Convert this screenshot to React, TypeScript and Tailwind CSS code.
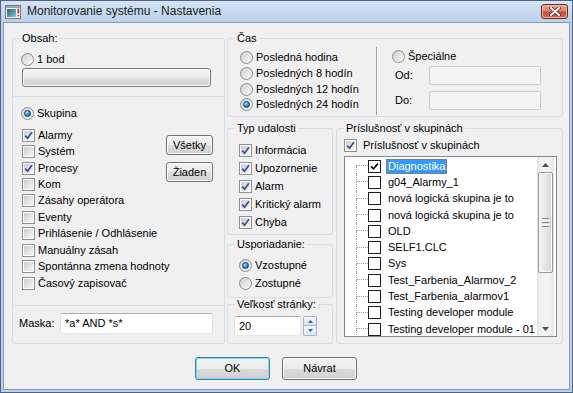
import React from "react";

function Radio({ checked }: { checked?: boolean }) {
  return (
    <span className="w-[13px] h-[13px] shrink-0 rounded-full border border-[#8c8c8c] bg-[linear-gradient(135deg,#cfcfcf,#fbfbfb)] flex items-center justify-center">
      {checked && (
        <span className="w-[7px] h-[7px] rounded-full border border-[#173f6a] bg-[radial-gradient(circle_at_35%_30%,#a6e4ff,#2c8ad3_55%,#123f70)]" />
      )}
    </span>
  );
}

function Check({ checked }: { checked?: boolean }) {
  return (
    <span className="w-[13px] h-[13px] shrink-0 border border-[#8e8f8f] bg-white p-[1px] flex">
      <span className="flex-1 bg-[linear-gradient(135deg,#c9cdd3,#f7f7f7)] flex items-center justify-center">
        {checked && (
          <svg width="9" height="9" viewBox="0 0 9 9">
            <path d="M1.2 4.6 L3.6 7.2 L7.9 1.2" stroke="#3b4e95" strokeWidth="1.7" fill="none" />
          </svg>
        )}
      </span>
    </span>
  );
}

function RadioRow({ label, checked, className = "" }: { label: string; checked?: boolean; className?: string }) {
  return (
    <div className={`flex items-center gap-[3px] ${className}`}>
      <Radio checked={checked} />
      <span className="whitespace-nowrap">{label}</span>
    </div>
  );
}

function CheckRow({ label, checked, className = "" }: { label: string; checked?: boolean; className?: string }) {
  return (
    <div className={`flex items-center gap-[3px] ${className}`}>
      <Check checked={checked} />
      <span className="whitespace-nowrap">{label}</span>
    </div>
  );
}

function Btn({ children, className = "", primary }: { children: React.ReactNode; className?: string; primary?: boolean }) {
  return (
    <div
      className={`flex items-center justify-center rounded-[3px] border bg-[linear-gradient(#f2f2f2_0%,#ebebeb_50%,#dddddd_51%,#cfcfcf_100%)] ${
        primary ? "border-[#3c7fb1] shadow-[inset_0_0_0_1px_#7ad8f8]" : "border-[#707070] shadow-[inset_0_0_0_1px_#fcfcfc]"
      } ${className}`}
    >
      {children}
    </div>
  );
}

function Group({ title, className = "", children }: { title: string; className?: string; children?: React.ReactNode }) {
  return (
    <fieldset className={`border border-[#d5dfe5] rounded-[3px] flex flex-col ${className}`}>
      <legend className="ml-[7px] px-[2px] leading-[12px]">{title}</legend>
      {children}
    </fieldset>
  );
}

function AppIcon() {
  return (
    <svg width="16" height="16" viewBox="0 0 16 16" className="shrink-0">
      <defs>
        <linearGradient id="ig" x1="0" y1="0" x2="1" y2="1">
          <stop offset="0" stopColor="#1f6f57" />
          <stop offset="1" stopColor="#8fb8e6" />
        </linearGradient>
      </defs>
      <rect x="0.5" y="1.5" width="15" height="13" fill="#f3f3f3" stroke="#7b7b7b" />
      <rect x="1" y="2" width="14" height="2" fill="#9aa6b4" />
      <rect x="2" y="5" width="9" height="8" fill="url(#ig)" />
      <rect x="12.5" y="4.5" width="1.6" height="5" fill="#d42a1c" />
      <rect x="12.5" y="10.8" width="1.6" height="1.6" fill="#d42a1c" />
    </svg>
  );
}

function CloseBtn() {
  return (
    <div className="ml-auto w-[27px] h-[15px] rounded-[3px] border border-[#6b2a1f] bg-[linear-gradient(#e9a99a_0%,#d98673_45%,#c4503b_55%,#cf6a52_100%)] shadow-[inset_0_0_0_1px_#f0b7a9] flex items-center justify-center">
      <svg width="12" height="9" viewBox="0 0 12 9">
        <path d="M2 1 L10 8 M10 1 L2 8" stroke="#5b2117" strokeWidth="3.6" strokeLinecap="round" />
        <path d="M2 1 L10 8 M10 1 L2 8" stroke="#ffffff" strokeWidth="2" strokeLinecap="round" />
      </svg>
    </div>
  );
}

function TextBox({ value = "", className = "", disabled }: { value?: string; className?: string; disabled?: boolean }) {
  return (
    <div
      className={`flex items-center px-[4px] rounded-[2px] border ${
        disabled
          ? "bg-[#f4f4f4] border-[#cbcdd0]"
          : "bg-white border-[#abadb3] border-x-[#dbdfe6] border-b-[#e3e9ef]"
      } ${className}`}
    >
      {value}
    </div>
  );
}

const tree = [
  "Diagnostika",
  "g04_Alarmy_1",
  "nová logická skupina je to",
  "nová logická skupina je to",
  "OLD",
  "SELF1.CLC",
  "Sys",
  "Test_Farbenia_Alarmov_2",
  "Test_Farbenia_alarmov1",
  "Testing developer module",
  "Testing developer module - 01",
];

const groups = [
  { label: "Alarmy", checked: true },
  { label: "Systém" },
  { label: "Procesy", checked: true },
  { label: "Kom" },
  { label: "Zásahy operátora" },
  { label: "Eventy" },
  { label: "Prihlásenie / Odhlásenie" },
  { label: "Manuálny zásah" },
  { label: "Spontánna zmena hodnoty" },
  { label: "Časový zapisovač" },
];

function TreeRow({ label, first, selected }: { label: string; first?: boolean; selected?: boolean }) {
  return (
    <div className="h-[16.3px] flex items-stretch pl-[11px] shrink-0">
      <div className="w-[12px] flex flex-col">
        <div className={`h-1/2 border-b border-dotted border-[#a0a0a0] ${first ? "" : "border-l"}`} />
        <div className="flex-1 border-l border-dotted border-[#a0a0a0]" />
      </div>
      <div className="flex items-center">
        <span className="w-[13px] h-[13px] border border-[#1c1c1c] bg-white flex items-center justify-center">
          {selected && (
            <svg width="9" height="9" viewBox="0 0 9 9">
              <path d="M1 4.2 L3.4 6.8 L8 1.6" stroke="#000" strokeWidth="1.6" fill="none" />
            </svg>
          )}
        </span>
        <span
          className={`ml-[5px] px-[1px] leading-[13px] border whitespace-nowrap ${
            selected ? "bg-[#3399ff] text-white border-dotted border-[#cc6600]" : "border-transparent"
          }`}
        >
          {label}
        </span>
      </div>
    </div>
  );
}

function ScrollBar() {
  return (
    <div className="w-[17px] mr-[2px] flex flex-col items-center bg-[linear-gradient(to_right,#e4e4e4,#f2f2f2_25%,#f2f2f2_75%,#e4e4e4)]">
      <div className="h-[15px] flex items-center justify-center">
        <svg width="7" height="4" viewBox="0 0 7 4">
          <path d="M0 4 L3.5 0 L7 4Z" fill="#4f4f4f" />
        </svg>
      </div>
      <div className="w-[15px] h-[101px] rounded-[2px] border border-[#979797] bg-[linear-gradient(to_right,#f4f4f4,#e6e6e6_50%,#d6d6d6)] shadow-[inset_0_0_0_1px_#fbfbfb] flex flex-col items-center justify-center gap-[1px]">
        <div className="w-[7px] h-px bg-[#8a8a8a]" />
        <div className="w-[7px] h-px bg-[#ffffff]" />
        <div className="w-[7px] h-px bg-[#8a8a8a]" />
        <div className="w-[7px] h-px bg-[#ffffff]" />
        <div className="w-[7px] h-px bg-[#8a8a8a]" />
      </div>
      <div className="flex-1" />
      <div className="h-[15px] flex items-center justify-center">
        <svg width="7" height="4" viewBox="0 0 7 4">
          <path d="M0 0 L3.5 4 L7 0Z" fill="#4f4f4f" />
        </svg>
      </div>
    </div>
  );
}

export default function App() {
  return (
    <div className="w-[573px] h-[393px] flex flex-col border border-[#4f6385] bg-[#bdd2ed] font-['Liberation_Sans',Arial,sans-serif] text-[11px] leading-[13px] text-black select-none">
      {/* title bar */}
      <div className="h-[21px] shrink-0 flex items-center pl-[4px] pr-[4px] bg-[linear-gradient(#d5e4f5,#bad0eb)]">
        <AppIcon />
        <span className="ml-[6px] text-[12px] text-[#1b1b1b]">Monitorovanie systému - Nastavenia</span>
        <CloseBtn />
      </div>

      {/* client area */}
      <div className="flex-1 mx-[2px] mb-[2px] border border-[#8598b5] bg-[#f0f0f0] flex flex-col">
        <div className="flex gap-[2px] pl-[8px] pt-[9px]">
          {/* left: Obsah */}
          <Group title="Obsah:" className="w-[213px] h-[312px]">
            <RadioRow label="1 bod" className="ml-[8px] mt-[8px] h-[14px]" />
            <div className="ml-[9px] mt-[2px] w-[189px] h-[19px] rounded-[3px] border border-[#7a7a7a] bg-[linear-gradient(#f4f4f4_0%,#ececec_50%,#dedede_51%,#d2d2d2_100%)] shadow-[inset_0_0_0_1px_#fafafa]" />
            <div className="mt-[9px] h-px bg-[#d5dfe5]" />
            <RadioRow label="Skupina" checked className="ml-[8px] mt-[9px] h-[14px]" />
            <div className="mt-[7px] h-[165px] flex">
              <div className="ml-[9px] w-[144px] flex flex-col">
                {groups.map((g) => (
                  <CheckRow key={g.label} label={g.label} checked={g.checked} className="h-[16.45px] shrink-0" />
                ))}
              </div>
              <div className="flex flex-col gap-[7px] pt-[8px]">
                <Btn className="w-[47px] h-[20px]">Všetky</Btn>
                <Btn className="w-[47px] h-[20px]">Žiaden</Btn>
              </div>
            </div>
            <div className="mt-[13px] h-px bg-[#d5dfe5]" />
            <div className="mt-[7px] h-[21px] flex items-center">
              <span className="ml-[6px] w-[41px]">Maska:</span>
              <TextBox value="*a* AND *s*" className="w-[153px] h-[21px]" />
            </div>
          </Group>

          {/* right column */}
          <div className="w-[336px] flex flex-col">
            <Group title="Čas" className="h-[85px]">
              <div className="flex">
                <div className="pl-[12px] w-[148px] pt-[6px] flex flex-col">
                  <RadioRow label="Posledná hodina" className="h-[15.7px]" />
                  <RadioRow label="Posledných 8 hodín" className="h-[15.7px]" />
                  <RadioRow label="Posledných 12 hodín" className="h-[15.7px]" />
                  <RadioRow label="Posledných 24 hodín" checked className="h-[15.7px]" />
                </div>
                <div className="mt-[3px] w-[2px] h-[68px] border-l border-r border-l-[#a0a0a0] border-r-white" />
                <div className="pl-[14px] pt-[5px] flex flex-col">
                  <RadioRow label="Špeciálne" className="h-[14px]" />
                  <div className="mt-[3px] h-[19px] flex items-center">
                    <span className="pl-[3px] w-[37px]">Od:</span>
                    <TextBox disabled className="w-[112px] h-[19px]" />
                  </div>
                  <div className="mt-[6px] h-[19px] flex items-center">
                    <span className="pl-[3px] w-[37px]">Do:</span>
                    <TextBox disabled className="w-[112px] h-[19px]" />
                  </div>
                </div>
              </div>
            </Group>

            <div className="mt-[5px] flex gap-[3px]">
              <div className="w-[106px] flex flex-col">
                <Group title="Typ udalosti" className="h-[113px]">
                  <div className="pl-[11px] pt-[7px] flex flex-col">
                    <CheckRow label="Informácia" checked className="h-[18px]" />
                    <CheckRow label="Upozornenie" checked className="h-[18px]" />
                    <CheckRow label="Alarm" checked className="h-[18px]" />
                    <CheckRow label="Kritický alarm" checked className="h-[18px]" />
                    <CheckRow label="Chyba" checked className="h-[18px]" />
                  </div>
                </Group>
                <Group title="Usporiadanie:" className="mt-[3px] h-[60px]">
                  <div className="pl-[11px] pt-[6px] flex flex-col">
                    <RadioRow label="Vzostupné" checked className="h-[18px]" />
                    <RadioRow label="Zostupné" className="h-[18px]" />
                  </div>
                </Group>
                <Group title="Veľkosť stránky:" className="h-[46px]">
                  <div className="mt-[6px] ml-[6px] h-[20px] flex">
                    <TextBox value="20" className="w-[67px] h-[20px]" />
                    <div className="ml-[2px] w-[14px] flex flex-col">
                      <div className="h-[10px] rounded-t-[2px] border border-[#a5b3c6] bg-[linear-gradient(#f5f8fc,#dce5f0)] flex items-center justify-center">
                        <svg width="5" height="3" viewBox="0 0 5 3">
                          <path d="M0 3 L2.5 0 L5 3Z" fill="#4a5d82" />
                        </svg>
                      </div>
                      <div className="h-[10px] rounded-b-[2px] border border-t-0 border-[#a5b3c6] bg-[linear-gradient(#f5f8fc,#dce5f0)] flex items-center justify-center">
                        <svg width="5" height="3" viewBox="0 0 5 3">
                          <path d="M0 0 L2.5 3 L5 0Z" fill="#4a5d82" />
                        </svg>
                      </div>
                    </div>
                  </div>
                </Group>
              </div>

              <Group title="Príslušnosť v skupinách" className="w-[227px] h-[222px]">
                <CheckRow label="Príslušnosť v skupinách" checked className="ml-[7px] mt-[4px] h-[14px] gap-[6px]" />
                <div className="ml-[7px] mt-[4px] w-[213px] h-[181px] border border-[#828790] bg-white flex overflow-hidden">
                  <div className="flex-1 pt-[1px] flex flex-col overflow-hidden">
                    {tree.map((t, i) => (
                      <TreeRow key={i} label={t} first={i === 0} selected={i === 0} />
                    ))}
                  </div>
                  <ScrollBar />
                </div>
              </Group>
            </div>
          </div>
        </div>

        {/* bottom buttons */}
        <div className="mt-[13px] pl-[191px] flex gap-[12px]">
          <Btn primary className="w-[75px] h-[23px]">OK</Btn>
          <Btn className="w-[75px] h-[23px]">Návrat</Btn>
        </div>
      </div>
    </div>
  );
}
